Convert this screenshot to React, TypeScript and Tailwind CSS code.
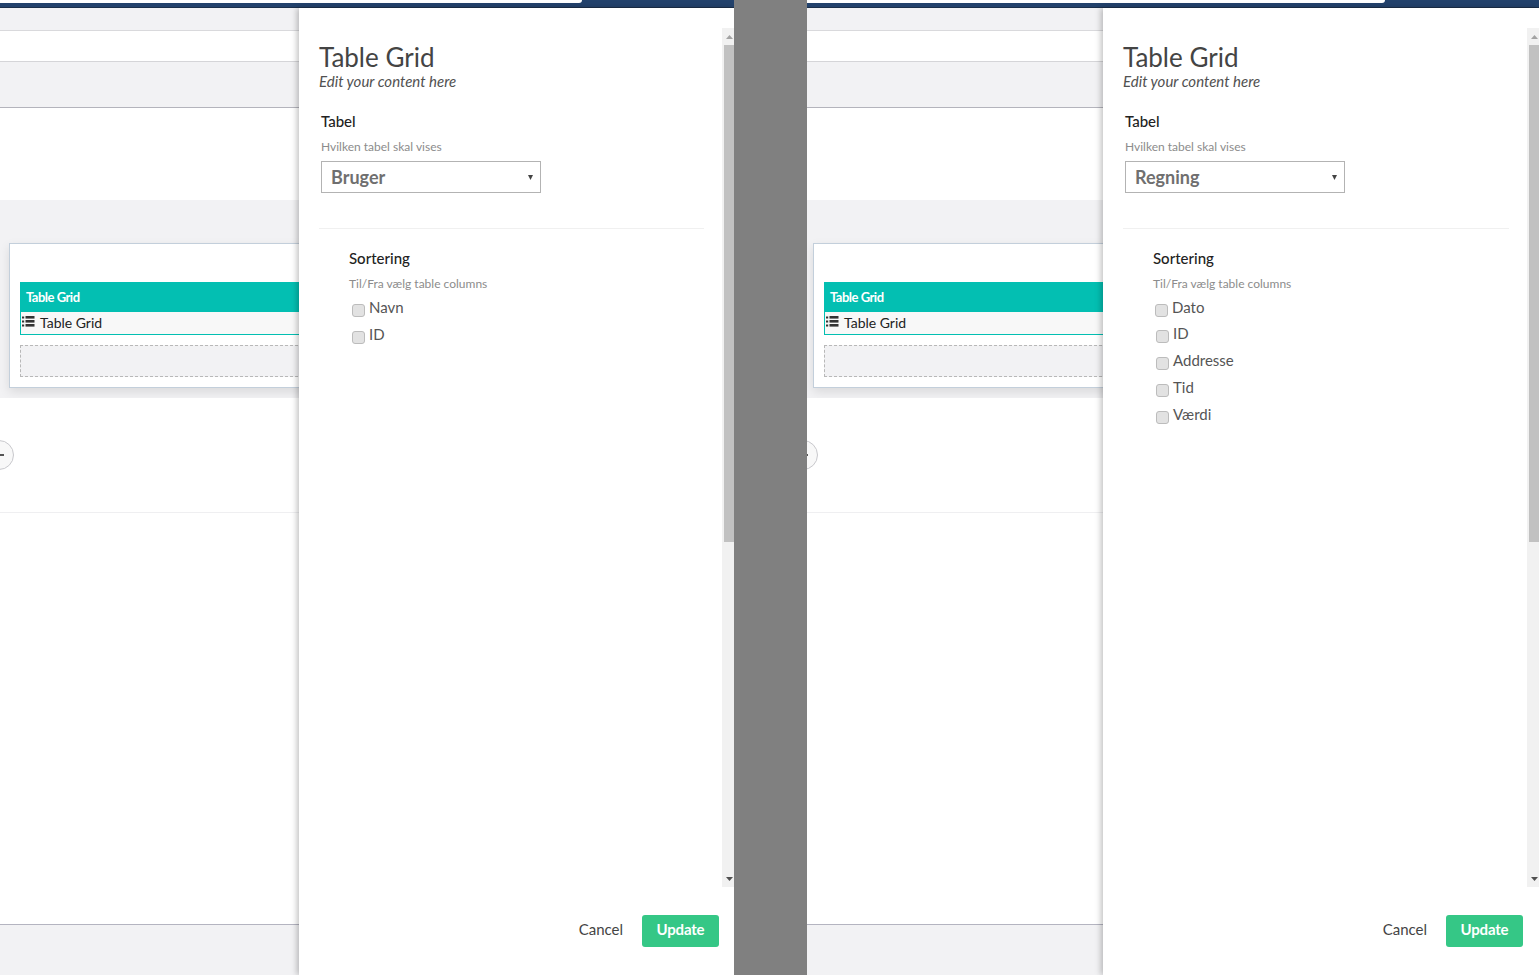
import React from 'react';

const TableListIcon = () => (
  <svg width="13" height="11" viewBox="0 0 13 11" className="-mt-[3px] shrink-0" fill="#333">
    <rect x="0" y="0.5" width="2.2" height="2" />
    <rect x="0" y="4.5" width="2.2" height="2" />
    <rect x="0" y="8.5" width="2.2" height="2" />
    <rect x="3.5" y="0" width="9" height="2.6" />
    <rect x="3.5" y="4" width="9" height="2.6" />
    <rect x="3.5" y="8" width="9" height="2.6" />
  </svg>
);

const Arrow = ({ up }: { up?: boolean }) => (
  <svg width="7" height="4" viewBox="0 0 7 4" fill={up ? '#a3a3a3' : '#505050'}>
    <path d={up ? 'M3.5 0L7 4H0z' : 'M0 0h7L3.5 4z'} />
  </svg>
);

const SelectArrow = () => (
  <svg width="5" height="5" viewBox="0 0 5 5" fill="#444">
    <path d="M0 0h5L2.5 5z" />
  </svg>
);

const Check = ({ label, tight }: { label: string; tight?: boolean }) => (
  <div className={`flex items-start ${tight ? 'h-[26px]' : 'h-[27px]'}`}>
    <span className={`mt-[6px] h-[13px] w-[13px] shrink-0 rounded-[3px] border border-[#bcbcbc] bg-[#e2e2e2] ${tight ? 'ml-[2px]' : 'ml-[3px]'}`} />
    <span className="-mt-[1px] ml-[4px] text-[15px] leading-[20px] text-[#555]">{label}</span>
  </div>
);

// page behind the drawer
const Background = ({ shift }: { shift?: boolean }) => (
  <div className={`flex min-w-0 flex-1 flex-col overflow-hidden bg-white ${shift ? '-ml-[3px]' : ''}`}>
    <div className="h-[23px] shrink-0 border-b border-[#d9d9dc] bg-[#f2f2f4]" />
    <div className="h-[31px] shrink-0 border-b border-[#d5d5d8] bg-white" />
    <div className="h-[46px] shrink-0 border-b border-[#b4b4bc] bg-[#f2f2f4]" />
    <div className="h-[92px] shrink-0 bg-white" />
    <div className="h-[198px] shrink-0 bg-[#f2f2f4] pl-[9px] pt-[43px]">
      <div className="h-[145px] w-[400px] border border-[#c3cfdb] bg-white px-[10px] pt-[38px] shadow-[0_4px_10px_rgba(0,0,0,0.1)]">
        <div className="flex h-[30px] items-center bg-[#03bfb2] pl-[6px] pt-[1px] text-[13px] font-bold tracking-[-0.5px] text-white">Table Grid</div>
        <div className="flex h-[23px] items-center gap-[5px] border-x border-b border-[#03bfb2] bg-[#f8f8f8] pl-[1px] text-[14px] leading-[20px] text-[#222]">
          <TableListIcon />
          <span className="-mt-[1px]">Table Grid</span>
        </div>
        <div className="mt-[10px] h-[32px] border border-dashed border-[#b8b8b8] bg-[#f2f2f4]" />
      </div>
    </div>
    <div className="relative h-[115px] shrink-0 border-b border-[#efeff1] bg-white">
      <span className="absolute left-[-16px] top-[42px] flex h-[30px] w-[30px] items-center justify-center rounded-full border border-[#c8c8cc] bg-[#f8f8f8]">
        <svg width="10" height="10" viewBox="0 0 10 10" fill="#555">
          <path d="M4 0h2v4h4v2H6v4H4V6H0V4h4z" />
        </svg>
      </span>
    </div>
    <div className="h-[412px] shrink-0 border-b border-[#b4b4c0] bg-white" />
    <div className="flex-1 bg-[#f2f2f4]" />
  </div>
);

const Drawer = ({ value, width, footerPad, columns }: { value: string; width: string; footerPad: string; columns: { label: string; tight?: boolean }[] }) => (
  <div className={`z-10 flex shrink-0 flex-col bg-white shadow-[-2px_0_6px_rgba(0,0,0,0.25)] ${width}`}>
    <div className="flex min-h-0 flex-1">
      <div className="min-w-0 flex-1 pl-[20px] pr-[18px] pt-[31px]">
        <h2 className="text-[26px] leading-[36px] text-[#444]">Table Grid</h2>
        <p className="-mt-[3px] text-[15px] italic leading-[18px] text-[#515151]">Edit your content here</p>

        <div className="pl-[2px] pt-[21px]">
          <div className="text-[15px] font-medium leading-[20px] text-[#222]">Tabel</div>
          <div className="mt-[7px] text-[12px] leading-[18px] text-[#8c8c8c]">Hvilken tabel skal vises</div>
          <div className="mt-[5px] flex h-[32px] w-[220px] items-center justify-between border border-[#b3b3b3] pl-[9px] pr-[7px]">
            <span className="text-[18px] font-bold text-[#6f6f6f]">{value}</span>
            <SelectArrow />
          </div>
        </div>

        <div className="mt-[35px] border-t border-[#f0f0f0] pl-[30px] pt-[19px]">
          <div className="text-[15px] font-medium leading-[20px] text-[#222]">Sortering</div>
          <div className="mt-[7px] text-[12px] leading-[18px] text-[#8c8c8c]">Til/Fra vælg table columns</div>
          <div className="mt-[5px]">
            {columns.map((c) => (
              <Check key={c.label} label={c.label} tight={c.tight} />
            ))}
          </div>
        </div>
      </div>

      {/* scrollbar */}
      <div className="mt-[20px] flex w-[12px] shrink-0 flex-col items-end bg-[#f1f1f1]">
        <div className="flex h-[17px] w-[10px] shrink-0 items-center justify-center"><Arrow up /></div>
        <div className="h-[497px] w-[10px] bg-[#c1c1c1]" />
        <div className="flex-1" />
        <div className="flex h-[17px] w-[10px] shrink-0 items-center justify-center"><Arrow /></div>
      </div>
    </div>

    <div className={`flex h-[88px] shrink-0 items-start justify-end gap-[19px] pt-[28px] ${footerPad}`}>
      <span className="text-[15px] leading-[29px] text-[#444]">Cancel</span>
      <span className="flex h-[32px] w-[77px] items-center justify-center rounded-[3px] bg-[#35c786] pb-[3px] text-[15px] font-bold tracking-[-0.2px] text-white">Update</span>
    </div>
  </div>
);

const Pane = ({ value, width, columns, tabEnd, drawerWidth, footerPad, shift }: { value: string; width: string; columns: { label: string; tight?: boolean }[]; tabEnd: string; drawerWidth: string; footerPad: string; shift?: boolean }) => (
  <div className={`flex h-[975px] shrink-0 flex-col overflow-hidden ${width}`}>
    {/* top strip */}
    <div className="relative h-[8px] shrink-0 border-b border-[#1b2f4a] bg-[#23426c]">
      <div className={`absolute left-0 top-0 h-[3px] rounded-br-[8px] bg-white ${tabEnd}`} />
    </div>
    <div className="flex min-h-0 flex-1">
      <Background shift={shift} />
      <Drawer value={value} width={drawerWidth} footerPad={footerPad} columns={columns} />
    </div>
  </div>
);

export default function App() {
  return (
    <div className="flex h-[975px] w-[1539px] overflow-hidden bg-white font-['Lato','Liberation_Sans',sans-serif]">
      <Pane value="Bruger" width="w-[734px]" drawerWidth="w-[435px]" footerPad="pr-[15px]" columns={[{ label: 'Navn' }, { label: 'ID' }]} tabEnd="w-[582px]" />
      <div className="w-[73px] shrink-0 bg-[#808080]" />
      <Pane value="Regning" width="w-[732px]" drawerWidth="w-[436px]" footerPad="pr-[16px]" shift columns={[{ label: 'Dato', tight: true }, { label: 'ID' }, { label: 'Addresse' }, { label: 'Tid' }, { label: 'Værdi' }]} tabEnd="w-[578px]" />
    </div>
  );
}
